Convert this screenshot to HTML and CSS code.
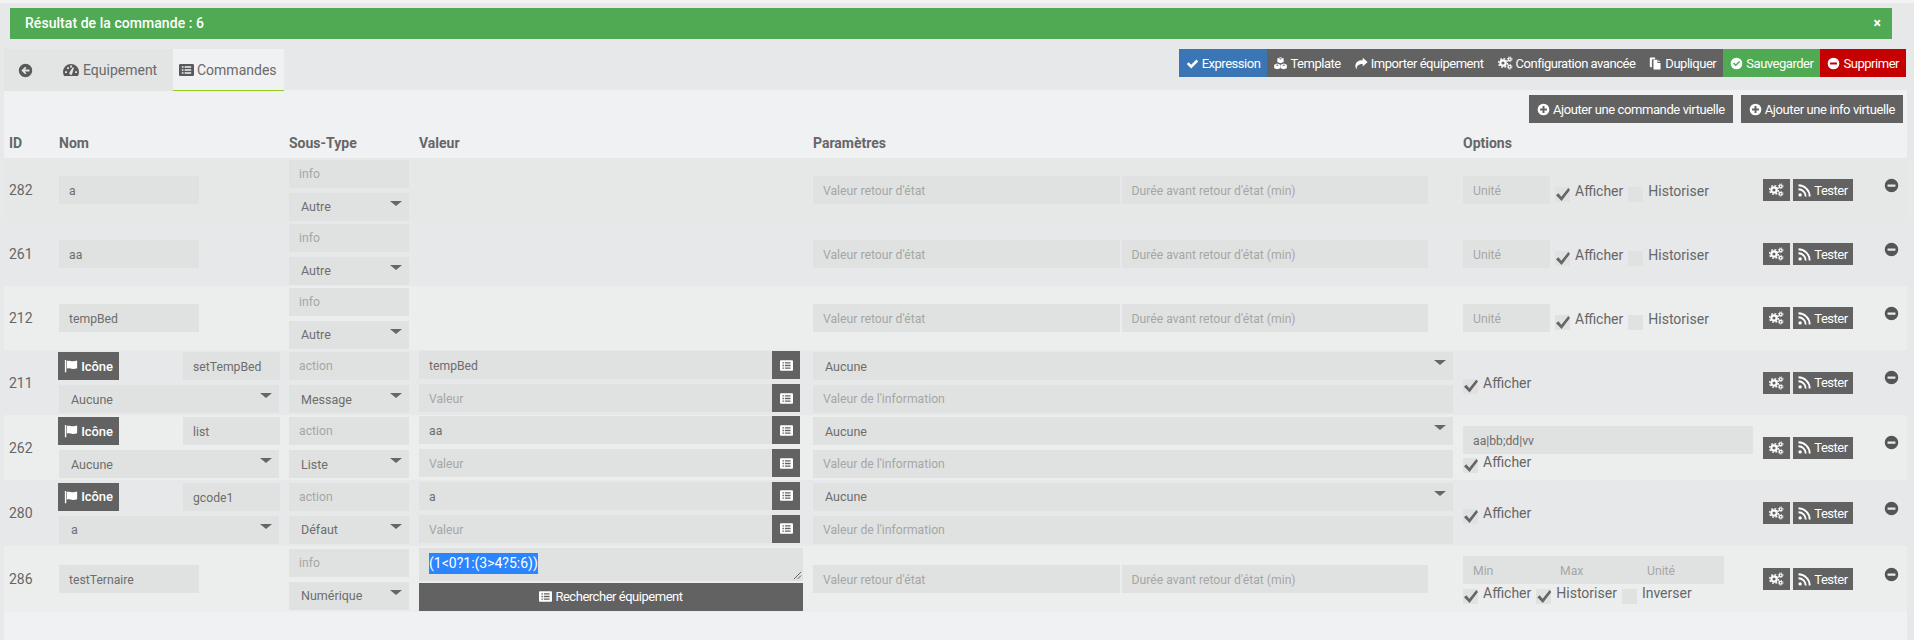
FILE: index.html
```html
<!DOCTYPE html>
<html lang="fr">
<head>
<meta charset="utf-8">
<title>Commandes</title>
<link rel="stylesheet" href="styles.css">
</head>
<body>
<svg class="defs" width="0" height="0" aria-hidden="true">
  <symbol id="i-check" viewBox="0 0 16 16"><path d="M1 8.6 3.2 6.4 6.4 9.6 12.8 3.2 15 5.4 6.4 14z"/></symbol>
  <symbol id="i-back" viewBox="0 0 16 16"><path fill-rule="evenodd" d="M8 .8a7.2 7.2 0 1 0 0 14.4A7.2 7.2 0 0 0 8 .8zM7.7 3.9 3.6 8l4.1 4.1 1.3-1.3L7.2 9H12.2V7H7.2L9 5.2z"/></symbol>
  <symbol id="i-gauge" viewBox="0 0 16 16"><path fill-rule="evenodd" d="M8 2a8 8 0 0 0-8 8c0 1.5.4 2.8 1.1 4h13.8c.7-1.2 1.1-2.5 1.1-4a8 8 0 0 0-8-8zM2 9.2h1.9v1.9H2zM4.1 5.2h1.9v1.9H4.1zM7.1 3.5h1.9v1.9H7.1zM12.1 9.2h1.9v1.9h-1.9zM6.3 10.8 9.7 5.3l1.2.5-1.7 6c.2 1.7-2.9 1.7-2.9-1z"/></symbol>
  <symbol id="i-list" viewBox="0 0 16 16"><path fill-rule="evenodd" d="M1.4 1.500h13.200c.8 0 1.400.6 1.400 1.400v10.200c0 .8-.6 1.400-1.400 1.400H1.400C.6 14.500 0 13.900 0 13.100V2.900C0 2.100.6 1.500 1.400 1.500zM3 4v1.600h1.800V4zM6 4v1.600h7V4zM3 7.200v1.600h1.800V7.200zM6 7.200v1.600h7V7.200zM3 10.400v1.600h1.800v-1.600zM6 10.400v1.600h7v-1.600z"/></symbol>
  <symbol id="i-cubes" viewBox="0 0 16 16"><path fill-rule="evenodd" d="M8 .3l3.900 1.400v4.500L8 7.700 4.100 6.200V1.700zM8 1.500 5.900 2.300 8 3.100l2.100-.8zM4 8l3.800 1.400v4.300L4 15.200.2 13.700V9.400zM4 9.200l-2.100.8L4 10.800l2.100-.8zM12 8l3.800 1.400v4.300L12 15.200l-3.800-1.500V9.400zM12 9.200 9.900 10l2.100.8 2.100-.8z"/></symbol>
  <symbol id="i-share" viewBox="0 0 16 16"><path d="M15.500 6.200 9.500.8v3.100C4 3.900.5 6.200.5 11c0 1.600.7 3.200 1.500 4.200C1.700 11.500 3.500 8.500 9.500 8.500v3.100z"/></symbol>
  <symbol id="i-cogs" viewBox="0 0 18 16">
    <g fill="none" stroke="currentColor"><circle cx="6" cy="8" r="3.200" stroke-width="2.600"/><circle cx="6" cy="8" r="5.300" stroke-width="1.600" stroke-dasharray="2.100 2.060"/><circle cx="14" cy="3.500" r="1.700" stroke-width="1.500"/><circle cx="14" cy="3.500" r="2.900" stroke-width="1" stroke-dasharray="1.200 1.080"/><circle cx="14" cy="12.500" r="1.700" stroke-width="1.500"/><circle cx="14" cy="12.500" r="2.900" stroke-width="1" stroke-dasharray="1.200 1.080"/></g>
  </symbol>
  <symbol id="i-files" viewBox="0 0 16 16"><path d="M2 .5h5.500v2.200L5 2.700c-.8 0-1.400.6-1.400 1.400v8.400H2c-.6 0-1-.4-1-1v-10c0-.6.4-1 1-1zM6 3.500h4.500V7.300h3.700V15c0 .3-.2.500-.5.500H6c-.3 0-.5-.2-.5-.5V4c0-.3.200-.5.500-.5zM11.500 3.700l2.600 2.600h-2.600z"/></symbol>
  <symbol id="i-ok" viewBox="0 0 16 16"><path fill-rule="evenodd" d="M8 .8a7.200 7.200 0 1 0 0 14.400A7.200 7.200 0 0 0 8 .8zM3.800 8.200l1.300-1.300 2 2 4-4 1.300 1.300-5.300 5.300z"/></symbol>
  <symbol id="i-minus" viewBox="0 0 16 16"><path fill-rule="evenodd" d="M8 .8a7.200 7.200 0 1 0 0 14.400A7.200 7.200 0 0 0 8 .8zM3.800 6.800h8.400v2.400H3.800z"/></symbol>
  <symbol id="i-plus" viewBox="0 0 16 16"><path fill-rule="evenodd" d="M8 .8a7.200 7.200 0 1 0 0 14.400A7.200 7.200 0 0 0 8 .8zM6.800 3.800h2.400v3h3v2.400h-3v3H6.800v-3h-3V6.800h3z"/></symbol>
  <symbol id="i-flag" viewBox="0 0 16 16"><path d="M1 1h1.600v14H1zM3.300 2.300C6 1 9 4 15 1.800v8.700C9 12.700 6 9.700 3.300 11z"/></symbol>
  <symbol id="i-rss" viewBox="0 0 16 16"><circle cx="2.600" cy="13.400" r="2.100"/><path fill="none" stroke="currentColor" stroke-width="2.300" d="M.6 6.500a8.900 8.900 0 0 1 8.900 8.900M.6 1.600a13.800 13.800 0 0 1 13.800 13.800"/></symbol>
</svg>

<div class="top-strip"></div>
<div class="alert"><span>Résultat de la commande : 6</span><span class="alert-close">×</span></div>

<div class="topbar">
  <ul class="tabs">
    <li class="tab tab-back"><svg class="ic-tab"><use href="#i-back"/></svg></li>
    <li class="tab tab-equip"><svg class="ic-tab"><use href="#i-gauge"/></svg>Equipement</li>
    <li class="tab tab-active"><svg class="ic-tab"><use href="#i-list"/></svg>Commandes</li>
  </ul>
  <div class="actions">
    <a class="btn btn-blue"><svg class="ic"><use href="#i-check"/></svg>Expression</a>
    <a class="btn"><svg class="ic"><use href="#i-cubes"/></svg>Template</a>
    <a class="btn"><svg class="ic"><use href="#i-share"/></svg>Importer équipement</a>
    <a class="btn"><svg class="ic ic-wide"><use href="#i-cogs"/></svg>Configuration avancée</a>
    <a class="btn"><svg class="ic"><use href="#i-files"/></svg>Dupliquer</a>
    <a class="btn btn-green"><svg class="ic"><use href="#i-ok"/></svg>Sauvegarder</a>
    <a class="btn btn-red"><svg class="ic"><use href="#i-minus"/></svg>Supprimer</a>
  </div>
</div>

<main class="panel">
  <div class="add-row">
    <a class="btn btn-add"><svg class="ic"><use href="#i-plus"/></svg>Ajouter une commande virtuelle</a>
    <a class="btn btn-add"><svg class="ic"><use href="#i-plus"/></svg>Ajouter une info virtuelle</a>
  </div>
  <table class="cmds">
    <colgroup>
      <col class="c-id"><col class="c-nom"><col class="c-type"><col class="c-val"><col class="c-par"><col class="c-opt"><col class="c-act"><col class="c-del">
    </colgroup>
    <thead>
      <tr><th>ID</th><th>Nom</th><th>Sous-Type</th><th>Valeur</th><th>Paramètres</th><th>Options</th><th></th><th></th></tr>
    </thead>
    <tbody>
      <tr class="r r64 odd0">
        <td class="id">282</td>
        <td><input class="f f-name" value="a"></td>
        <td><div class="stack"><input class="f" placeholder="info"><div class="sel"><select class="f"><option>Autre</option></select></div></div></td>
        <td></td>
        <td><div class="pair"><input class="f" placeholder="Valeur retour d'état"><input class="f" placeholder="Durée avant retour d'état (min)"></div></td>
        <td><div class="opts"><input class="f f-unit" placeholder="Unité"><label class="lab"><input type="checkbox" class="chk" checked>Afficher</label><label class="lab"><input type="checkbox" class="chk">Historiser</label></div></td>
        <td><div class="tools"><a class="btn btn-gear"><svg class="ic ic-wide"><use href="#i-cogs"/></svg></a><a class="btn btn-test"><svg class="ic"><use href="#i-rss"/></svg>Tester</a></div></td>
        <td><svg class="ic-del"><use href="#i-minus"/></svg></td>
      </tr>
      <tr class="r r64 odd">
        <td class="id">261</td>
        <td><input class="f f-name" value="aa"></td>
        <td><div class="stack"><input class="f" placeholder="info"><div class="sel"><select class="f"><option>Autre</option></select></div></div></td>
        <td></td>
        <td><div class="pair"><input class="f" placeholder="Valeur retour d'état"><input class="f" placeholder="Durée avant retour d'état (min)"></div></td>
        <td><div class="opts"><input class="f f-unit" placeholder="Unité"><label class="lab"><input type="checkbox" class="chk" checked>Afficher</label><label class="lab"><input type="checkbox" class="chk">Historiser</label></div></td>
        <td><div class="tools"><a class="btn btn-gear"><svg class="ic ic-wide"><use href="#i-cogs"/></svg></a><a class="btn btn-test"><svg class="ic"><use href="#i-rss"/></svg>Tester</a></div></td>
        <td><svg class="ic-del"><use href="#i-minus"/></svg></td>
      </tr>
      <tr class="r r64 even">
        <td class="id">212</td>
        <td><input class="f f-name" value="tempBed"></td>
        <td><div class="stack"><input class="f" placeholder="info"><div class="sel"><select class="f"><option>Autre</option></select></div></div></td>
        <td></td>
        <td><div class="pair"><input class="f" placeholder="Valeur retour d'état"><input class="f" placeholder="Durée avant retour d'état (min)"></div></td>
        <td><div class="opts"><input class="f f-unit" placeholder="Unité"><label class="lab"><input type="checkbox" class="chk" checked>Afficher</label><label class="lab"><input type="checkbox" class="chk">Historiser</label></div></td>
        <td><div class="tools"><a class="btn btn-gear"><svg class="ic ic-wide"><use href="#i-cogs"/></svg></a><a class="btn btn-test"><svg class="ic"><use href="#i-rss"/></svg>Tester</a></div></td>
        <td><svg class="ic-del"><use href="#i-minus"/></svg></td>
      </tr>
      <tr class="r r65 odd">
        <td class="id">211</td>
        <td><div class="stack"><div class="icon-line"><a class="btn btn-icon"><svg class="ic"><use href="#i-flag"/></svg>Icône</a><input class="f f-cmd" value="setTempBed"></div><div class="sel sel-wide"><select class="f"><option>Aucune</option></select></div></div></td>
        <td><div class="stack"><input class="f" placeholder="action"><div class="sel"><select class="f"><option>Message</option></select></div></div></td>
        <td><div class="stack stack-val"><div class="group"><input class="f" value="tempBed"><a class="btn btn-pick"><svg class="ic"><use href="#i-list"/></svg></a></div><div class="group"><input class="f" placeholder="Valeur"><a class="btn btn-pick"><svg class="ic"><use href="#i-list"/></svg></a></div></div></td>
        <td><div class="stack stack-par"><div class="sel"><select class="f"><option>Aucune</option></select></div><input class="f" placeholder="Valeur de l'information"></div></td>
        <td><div class="opts opts-solo"><label class="lab"><input type="checkbox" class="chk" checked>Afficher</label></div></td>
        <td><div class="tools"><a class="btn btn-gear"><svg class="ic ic-wide"><use href="#i-cogs"/></svg></a><a class="btn btn-test"><svg class="ic"><use href="#i-rss"/></svg>Tester</a></div></td>
        <td><svg class="ic-del"><use href="#i-minus"/></svg></td>
      </tr>
      <tr class="r r65 even">
        <td class="id">262</td>
        <td><div class="stack"><div class="icon-line"><a class="btn btn-icon"><svg class="ic"><use href="#i-flag"/></svg>Icône</a><input class="f f-cmd" value="list"></div><div class="sel sel-wide"><select class="f"><option>Aucune</option></select></div></div></td>
        <td><div class="stack"><input class="f" placeholder="action"><div class="sel"><select class="f"><option>Liste</option></select></div></div></td>
        <td><div class="stack stack-val"><div class="group"><input class="f" value="aa"><a class="btn btn-pick"><svg class="ic"><use href="#i-list"/></svg></a></div><div class="group"><input class="f" placeholder="Valeur"><a class="btn btn-pick"><svg class="ic"><use href="#i-list"/></svg></a></div></div></td>
        <td><div class="stack stack-par"><div class="sel"><select class="f"><option>Aucune</option></select></div><input class="f" placeholder="Valeur de l'information"></div></td>
        <td><div class="opts-col opts-list"><input class="f f-list" value="aa|bb;dd|vv"><label class="lab"><input type="checkbox" class="chk" checked>Afficher</label></div></td>
        <td><div class="tools"><a class="btn btn-gear"><svg class="ic ic-wide"><use href="#i-cogs"/></svg></a><a class="btn btn-test"><svg class="ic"><use href="#i-rss"/></svg>Tester</a></div></td>
        <td><svg class="ic-del"><use href="#i-minus"/></svg></td>
      </tr>
      <tr class="r r66 odd">
        <td class="id">280</td>
        <td><div class="stack"><div class="icon-line"><a class="btn btn-icon"><svg class="ic"><use href="#i-flag"/></svg>Icône</a><input class="f f-cmd" value="gcode1"></div><div class="sel sel-wide"><select class="f"><option>a</option></select></div></div></td>
        <td><div class="stack"><input class="f" placeholder="action"><div class="sel"><select class="f"><option>Défaut</option></select></div></div></td>
        <td><div class="stack stack-val"><div class="group"><input class="f" value="a"><a class="btn btn-pick"><svg class="ic"><use href="#i-list"/></svg></a></div><div class="group"><input class="f" placeholder="Valeur"><a class="btn btn-pick"><svg class="ic"><use href="#i-list"/></svg></a></div></div></td>
        <td><div class="stack stack-par"><div class="sel"><select class="f"><option>Aucune</option></select></div><input class="f" placeholder="Valeur de l'information"></div></td>
        <td><div class="opts opts-solo"><label class="lab"><input type="checkbox" class="chk" checked>Afficher</label></div></td>
        <td><div class="tools"><a class="btn btn-gear"><svg class="ic ic-wide"><use href="#i-cogs"/></svg></a><a class="btn btn-test"><svg class="ic"><use href="#i-rss"/></svg>Tester</a></div></td>
        <td><svg class="ic-del"><use href="#i-minus"/></svg></td>
      </tr>
      <tr class="r r66 even">
        <td class="id">286</td>
        <td><input class="f f-name" value="testTernaire"></td>
        <td><div class="stack"><input class="f" placeholder="info"><div class="sel"><select class="f"><option>Numérique</option></select></div></div></td>
        <td><div class="stack-ta"><div class="ta"><span class="sel-text">(1&lt;0?1:(3&gt;4?5:6))</span><svg class="ta-grip" viewBox="0 0 10 10"><path d="M1 9 9 1M5 9 9 5" fill="none" stroke="#555" stroke-width="1"/></svg></div><a class="btn btn-search"><svg class="ic"><use href="#i-list"/></svg>Rechercher équipement</a></div></td>
        <td><div class="pair"><input class="f" placeholder="Valeur retour d'état"><input class="f" placeholder="Durée avant retour d'état (min)"></div></td>
        <td><div class="opts-col opts-range"><div class="minmax"><input class="f" placeholder="Min"><input class="f" placeholder="Max"><input class="f" placeholder="Unité"></div><div class="opts-line"><label class="lab"><input type="checkbox" class="chk" checked>Afficher</label><label class="lab"><input type="checkbox" class="chk" checked>Historiser</label><label class="lab"><input type="checkbox" class="chk">Inverser</label></div></div></td>
        <td><div class="tools"><a class="btn btn-gear"><svg class="ic ic-wide"><use href="#i-cogs"/></svg></a><a class="btn btn-test"><svg class="ic"><use href="#i-rss"/></svg>Tester</a></div></td>
        <td><svg class="ic-del"><use href="#i-minus"/></svg></td>
      </tr>
    </tbody>
  </table>
</main>
</body>
</html>
```
FILE: styles.css
```css
* { box-sizing: border-box; }
html, body { margin: 0; padding: 0; height: 640px; overflow: hidden; }
body { background: #e7e8ea; font-family: Roboto, "Liberation Sans", sans-serif; font-size: 14px; color: #666; display: flex; flex-direction: column; }
.defs { display: block; height: 0; }
.top-strip { height: 3px; background: #f3f3f3; flex: none; }
.alert { flex: none; margin: 5px 0 0 10px; width: 1882px; height: 31px; background: #4faa53; color: #fff; display: flex; align-items: center; justify-content: space-between; padding: 0 11px 2px 15px; font-size: 14px; font-weight: 500; letter-spacing: 0.05px; }
.alert-close { font-weight: 700; font-size: 14px; }
.topbar { flex: none; margin-top: 10px; height: 42px; padding-left: 4px; width: 1906px; display: flex; justify-content: space-between; align-items: flex-start; position: relative; z-index: 1; }
.tabs { list-style: none; margin: 0; padding: 0; display: flex; height: 42px; }
.tab { display: flex; align-items: center; height: 42px; color: #6a6a6a; font-size: 14px; background: #e3e4e4; }
.tab-back { width: 35px; padding-left: 14px; }
.tab-equip { width: 134px; padding-left: 24px; }
.tab-equip .ic-tab { margin-right: 4px; }
.tab-active { width: 111px; padding-left: 6px; background: #eff1f3; border-bottom: 1px solid #94c81c; }
.tab-active .ic-tab { width: 15px; }
.ic-tab { width: 16px; height: 16px; fill: #595959; margin-right: 3px; flex: none; }
.tab-back .ic-tab { width: 15px; height: 15px; margin: 0; }
.actions { display: flex; }
.btn { display: inline-flex; align-items: center; justify-content: center; background: #626262; color: #fff; fill: #fff; font-size: 13px; white-space: nowrap; text-decoration: none; height: 28px; padding: 0 7px; font-weight: 400; letter-spacing: -0.47px; }
.ic { width: 13px; height: 13px; margin-right: 3px; flex: none; color: #fff; fill: #fff; }
.ic-wide { width: 15px; height: 14px; }
.btn-blue { background: #3a75b5; }
.btn-green { background: #4faa53; }
.btn-red { background: #c40000; }
.btn-add { padding: 0 8px; letter-spacing: -0.4px; }
.panel { flex: 1; width: 1903px; margin-left: 4px; margin-top: -1px; background: #eff1f3; }
.add-row { display: flex; justify-content: flex-end; gap: 8px; padding: 5px 4px 0 0; height: 33px; }
.cmds { width: 1903px; table-layout: fixed; border-collapse: collapse; }
.c-id { width: 50px; } .c-nom { width: 230px; } .c-type { width: 130px; } .c-val { width: 394px; } .c-par { width: 650px; } .c-opt { width: 300px; } .c-act { width: 105px; } .c-del { width: 44px; }
.cmds th { height: 35px; text-align: left; font-weight: 700; font-size: 14px; color: #666; padding: 5px 0 0 5px; }
.cmds td { padding: 0 0 0 5px; vertical-align: middle; }
.r64 { height: 64px; } .r65 { height: 65px; } .r66 { height: 66px; }
.odd0 { background: #e6e8e8; } .odd { background: #e7e8ea; } .even { background: #eceeee; }
.id { font-size: 14px; color: #666; }
.f { display: block; width: 100%; height: 28px; border: 0; outline: 0; background: #e0e2e1; color: #6d6d6d; font-family: Roboto, "Liberation Sans", sans-serif; font-size: 12.2px; padding: 2px 10px 0; margin: 0; border-radius: 0; }
.f::placeholder { color: #a6a6a6; opacity: 1; }
select.f { appearance: none; -webkit-appearance: none; padding: 0 12px; font-size: 12.5px; }
.stack > .f { padding-top: 0; }
.f-name { width: 140px; }
.stack { display: flex; flex-direction: column; gap: 5px; width: 120px; }
.stack-par { width: 640px; }
.stack-val { width: 381px; padding-bottom: 2px; }
.cmds td:nth-child(2) .stack { width: 222px; margin-left: -1px; }
.cmds td:nth-child(2) .sel-wide { margin-left: 1px; width: 220px; }
.icon-line { display: flex; justify-content: space-between; }
.btn-icon { width: 61px; font-weight: 500; letter-spacing: -0.1px; }
.btn-icon .ic { width: 14px; height: 14px; }
.f-cmd { width: 97px; }
.sel { position: relative; }
.sel::after { content: ""; position: absolute; right: 7px; top: 8px; border-left: 6px solid transparent; border-right: 6px solid transparent; border-top: 5px solid #666; pointer-events: none; }
.group { display: flex; }
.group .f { flex: 1; width: auto; min-width: 0; }
.btn-pick { width: 28px; padding: 0; flex: none; }
.btn-pick .ic { margin: 0; }
.pair { display: flex; gap: 2px; width: 615px; }
.pair .f { flex: 1; min-width: 0; }
.opts { display: flex; align-items: center; gap: 5px; }
.opts .lab { margin-top: 2px; }
.opts-solo .lab { margin-top: 0; }
.f-unit { width: 87px; }
.opts-col { display: flex; flex-direction: column; align-items: flex-start; }
.opts-list { padding-top: 4px; }
.opts-list .lab { margin-top: -3px; }
.opts-range { padding-top: 2px; }
.opts-line { display: flex; align-items: center; gap: 5px; margin-top: -2px; }
.f-list { width: 290px; }
.minmax { display: flex; width: 261px; }
.minmax .f { flex: 1; min-width: 0; }
.lab { display: inline-flex; align-items: center; font-size: 14px; color: #666; }
.chk { appearance: none; -webkit-appearance: none; width: 15px; height: 15px; margin: 7px 5px 0 0; background: #e0e2e1; flex: none; display: block; position: relative; }
.chk:checked::after { content: ""; position: absolute; left: 1px; top: 1px; width: 14px; height: 13px; background: #666; clip-path: polygon(0 55%, 17% 40%, 38% 68%, 88% 0, 100% 15%, 40% 100%); }
.tools { display: flex; gap: 3px; }
.btn-gear { width: 27px; height: 22px; padding: 0; }
.btn-gear .ic { margin: 0; }
.btn-test { width: 60px; height: 22px; padding: 0; }
.ic-del { display: block; width: 15px; height: 15px; margin: 0 0 10px 16px; fill: #555; }
.stack-ta { display: flex; flex-direction: column; gap: 2px; width: 384px; }
.ta { position: relative; height: 33px; background: #e0e2e1; padding: 5px 10px 0; line-height: 21px; font-size: 14px; color: #fff; }
.sel-text { background: #2a85ff; color: #fff; display: inline-block; height: 21px; }
.ta-grip { position: absolute; right: 1px; bottom: 1px; width: 9px; height: 9px; }
.btn-search { height: 28px; width: 100%; }
```
